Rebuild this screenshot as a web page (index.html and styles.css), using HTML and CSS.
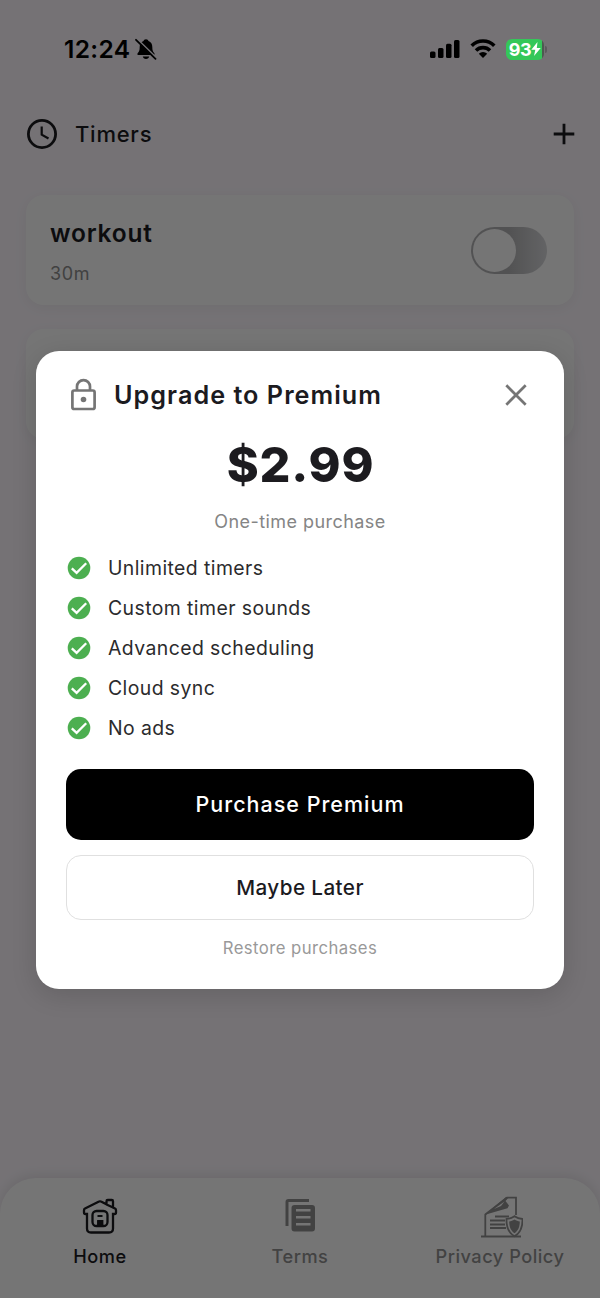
FILE: index.html
```html
<!DOCTYPE html>
<html lang="en">
<head>
<meta charset="utf-8">
<title>Timers</title>
<link rel="stylesheet" href="styles.css">
</head>
<body>
<div class="screen">
  <header class="status">
    <div class="status-left">
      <span class="clock">12:24</span>
      <svg class="bell" width="22" height="22" viewBox="0 0 22 22">
        <path d="M11 1.2c1.4 0 2.3.8 2.5 1.9 2.600 1 3.800 3.200 3.800 5.900 0 3.300.6 4.600 1.900 6 .8.900.4 2.100-.8 2.100H3.600c-1.200 0-1.600-1.200-.8-2.100 1.300-1.400 1.900-2.700 1.900-6 0-2.700 1.200-4.900 3.800-5.900.2-1.100 1.100-1.900 2.500-1.900zM7.800 18.500h6.400c-.3 1.600-1.500 2.500-3.200 2.500s-2.900-.9-3.200-2.500z"/>
        <path class="bell-gap" d="M2.300 1l19 18.600"/>
        <path class="bell-line" d="M1 1.800l19.500 19"/>
      </svg>
    </div>
    <div class="status-right">
      <svg width="30" height="20" viewBox="0 0 30 20">
        <rect x="0" y="12.500" width="5.500" height="6.500" rx="1.500"/><rect x="8" y="9" width="5.500" height="10" rx="1.500"/><rect x="16" y="4.800" width="5.500" height="14.200" rx="1.500"/><rect x="24" y="1" width="5.500" height="18" rx="1.500"/>
      </svg>
      <svg width="26" height="20" viewBox="0 0 26 20">
        <path class="wifi" d="M1.700 6.700a16 16 0 0 1 22.600 0M6 11.500a10 10 0 0 1 14 0"/>
        <path d="M13 19l-4.200-4.200a6 6 0 0 1 8.400 0z"/>
      </svg>
      <div class="battery"><span>93</span><svg width="10" height="14" viewBox="0 0 10 14"><path d="M6.500 0L.3 7.700H4.300L3 14l6.700-8H5.800z"/></svg><i></i></div>
    </div>
  </header>

  <div class="topbar">
    <svg width="32" height="32" viewBox="0 0 32 32"><circle cx="16" cy="16" r="13.600"/><path class="thin" d="M15.700 8.500v8.200l6.800 3.800"/></svg>
    <h1>Timers</h1>
    <svg class="plus" width="24" height="24" viewBox="0 0 24 24"><path d="M12 1.700v20.600M1.700 12h20.600"/></svg>
  </div>

  <main class="list">
    <section class="card">
      <div class="card-text"><h2>workout</h2><p>30m</p></div>
      <div class="switch"><div class="knob"></div></div>
    </section>
    <section class="card card-next"></section>
  </main>

  <nav class="tabs">
    <div class="tab active">
      <svg width="40" height="42" viewBox="0 0 40 42">
        <path d="M7 17H5.500a1.500 1.500 0 0 1-1.500-1.500v-2.300q0-1.200 1-1.700L19 4.600a2 2 0 0 1 2 0l5.500 2.700V4.200q0-1.200 1.200-1.200h4.100q1.200 0 1.200 1.200v6.300l2 1q1 .5 1 1.700v2.300a1.500 1.500 0 0 1-1.500 1.500H33v14.500q0 4-4 4H11q-4 0-4-4zM26.500 7.500l6.500 3"/>
        <rect x="12.500" y="14" width="15" height="15" rx="4"/>
        <path class="detail" d="M17.500 19h5M18 27.500V24h4.500v3.500z"/><path class="solid" d="M17.500 24h5v4h-5z"/>
      </svg>
      <span>Home</span>
    </div>
    <div class="tab">
      <svg width="40" height="42" viewBox="0 0 40 42">
        <path class="pages" d="M7 29V5q0-1.500 1.500-1.500H29"/>
        <path class="solid" fill-rule="evenodd" d="M14.500 8h17.500q3 0 3 3v20.500q0 3-3 3H14.500q-3 0-3-3V11q0-3 3-3zM16 12v2.600h14.500V12zm0 7v2.600h14.500V19zm0 7v2.600h14.500V26z"/>
      </svg>
      <span>Terms</span>
    </div>
    <div class="tab">
      <svg class="policy" width="42" height="42" viewBox="0 0 42 42">
        <path d="M0 40.500h40M4.300 40V18.500L26 1.700h9V19"/>
        <path class="solid" d="M4 18.800L25 1h3l-3.500 4 3.500 4.500-1.500 2.700z"/>
        <path class="cut" d="M13 13L23.500 5.500 20 10z"/>
        <path d="M14 20.500h14M9 24.500h15M9 28.500h15M9 32h16"/>
        <path class="shield" d="M33.500 20.200c2.500 1.800 5 2.600 8 2.800.2 8-1.500 13.500-8 17.300-6.500-3.800-8.200-9.300-8-17.300 3-.2 5.500-1 8-2.800z"/>
        <path class="solid" d="M33.500 23.500c1.800 1.200 3.500 1.800 5.300 2-.1 5.500-1.500 9-5.300 11.700-3.800-2.700-5.200-6.200-5.300-11.700 1.800-.2 3.500-.8 5.300-2z"/>
      </svg>
      <span>Privacy Policy</span>
    </div>
  </nav>
</div>

<div class="scrim">
  <div class="dialog">
    <div class="dialog-head">
      <svg width="28" height="34" viewBox="0 0 28 34"><rect x="2.400" y="12.500" width="22.200" height="18.500" rx="1.800"/><path d="M7 12V8.600a6.500 6.500 0 0 1 13 0V12"/><circle class="dot" cx="13.500" cy="21.500" r="2.800"/></svg>
      <h3>Upgrade to Premium</h3>
      <svg class="close" width="22" height="22" viewBox="0 0 22 22"><path d="M1.300 1.300l19.400 19.400M20.700 1.300L1.300 20.700"/></svg>
    </div>
    <div class="price">$2.99</div>
    <div class="once">One-time purchase</div>
    <ul class="features">
      <li><svg class="check" width="24" height="24" viewBox="0 0 24 24"><circle cx="12" cy="12" r="11.300"/><path d="M4.800 12.300l4.800 4.600 9.600-9.600"/></svg><span>Unlimited timers</span></li>
      <li><svg class="check" width="24" height="24" viewBox="0 0 24 24"><circle cx="12" cy="12" r="11.300"/><path d="M4.800 12.300l4.800 4.600 9.600-9.600"/></svg><span>Custom timer sounds</span></li>
      <li><svg class="check" width="24" height="24" viewBox="0 0 24 24"><circle cx="12" cy="12" r="11.300"/><path d="M4.800 12.300l4.800 4.600 9.600-9.600"/></svg><span>Advanced scheduling</span></li>
      <li><svg class="check" width="24" height="24" viewBox="0 0 24 24"><circle cx="12" cy="12" r="11.300"/><path d="M4.800 12.300l4.800 4.600 9.600-9.600"/></svg><span>Cloud sync</span></li>
      <li><svg class="check" width="24" height="24" viewBox="0 0 24 24"><circle cx="12" cy="12" r="11.300"/><path d="M4.800 12.300l4.800 4.600 9.600-9.600"/></svg><span>No ads</span></li>
    </ul>
    <button class="buy">Purchase Premium</button>
    <button class="later">Maybe Later</button>
    <div class="restore">Restore purchases</div>
  </div>
</div>
</body>
</html>
```
FILE: styles.css
```css
* { box-sizing: border-box; }
body { margin: 0; font-family: Inter, "Liberation Sans", sans-serif; color: #1c1b1f; }
h1, h2, h3, p, ul { margin: 0; padding: 0; }
svg { display: block; flex: none; }

.screen { height: 1298px; background: #fef9ff; display: flex; flex-direction: column; overflow: hidden; }

.status { height: 98px; padding: 0 56px 0 64px; display: flex; justify-content: space-between; align-items: center; position: relative; z-index: 3; color: #000; }
.status-left { display: flex; align-items: center; gap: 5px; }
.clock { font-size: 24.500px; font-weight: 600; letter-spacing: .35px; }
.bell-gap { stroke: #757376; stroke-width: 1.600; }
.bell-line { stroke: #000; stroke-width: 1.800; stroke-linecap: round; }
.status-right { display: flex; align-items: center; gap: 10px; }
.wifi { fill: none; stroke: #000; stroke-width: 3.600; }
.battery { width: 38px; height: 21px; border-radius: 6px; background: linear-gradient(90deg, #34c759 94%, #4d5a50 94%); color: #fff; display: flex; align-items: center; justify-content: center; font-size: 18px; font-weight: 700; letter-spacing: -.3px; position: relative; }
.battery svg { fill: #fff; }
.battery i { position: absolute; right: -3px; top: 7px; width: 2px; height: 7px; border-radius: 0 2px 2px 0; background: #5c5a5d; }

.topbar { height: 72px; padding: 0 24px 0 26px; display: flex; align-items: center; gap: 17px; }
.topbar svg { fill: none; stroke: #1c1b1f; stroke-width: 2.800; }
.topbar svg .thin { stroke-width: 2.200; }
.topbar h1 { font-size: 22px; font-weight: 500; letter-spacing: .75px; }
.topbar .plus { margin-left: auto; }

.list { padding: 25px 26px; display: flex; flex-direction: column; gap: 24px; }
.card { height: 110px; padding: 0 27px 0 24px; border-radius: 18px; background: #fff; box-shadow: 0 3px 14px rgba(0, 0, 0, .05); display: flex; align-items: center; justify-content: space-between; }
.card h2 { font-size: 24.500px; line-height: 30px; font-weight: 600; letter-spacing: .8px; }
.card p { margin-top: 15px; font-size: 18px; line-height: 22px; letter-spacing: .65px; color: #8e8e8e; }
.card-text { padding-top: 2px; }
.switch { width: 76px; height: 47px; border-radius: 24px; padding: 2px 1.500px; background: linear-gradient(90deg, #b4b4b6 50%, #d8d9dc); }
.knob { width: 43px; height: 43px; border-radius: 50%; background: #fff; }

.tabs { height: 120px; margin-top: auto; padding: 19px 0 0; border-radius: 36px 36px 0 0; background: #fff; box-shadow: 0 -3px 12px rgba(0, 0, 0, .09); display: grid; grid-template-columns: repeat(3, 1fr); }
.tab { display: flex; flex-direction: column; align-items: center; gap: 6px; font-size: 18.200px; line-height: 22px; font-weight: 500; letter-spacing: .5px; color: #919191; white-space: nowrap; }
.tab svg { fill: none; stroke: currentColor; stroke-width: 1.800; }
.tab svg .solid { fill: currentColor; stroke: none; }
.tab svg .cut { fill: #fff; stroke: none; }
.tab svg .pages { stroke-width: 3; }
.tab svg .shield { fill: #fff; }
.tab .policy { margin: -1px 0 1px 4px; }
.active { color: #1c1b1f; }
.tab.active svg { stroke-width: 2.300; }
.active .detail { stroke-width: 1.800; }

.scrim { position: absolute; z-index: 2; inset: 0; height: 1298px; background: rgba(0, 0, 0, .54); display: flex; flex-direction: column; align-items: center; padding-top: 351px; }
.dialog { width: 528px; height: 638px; padding: 21px 30px 0; border-radius: 23px; background: #fff; box-shadow: 0 6px 26px rgba(0, 0, 0, .14); display: flex; flex-direction: column; }
.dialog-head { height: 46px; padding: 0 7px 0 4px; display: flex; align-items: center; gap: 16px; }
.dialog-head svg { fill: none; stroke: #757575; stroke-width: 2.700; }
.dialog-head .dot { fill: #757575; stroke: none; }
.dialog-head .close { margin-left: auto; }
.dialog-head h3 { font-size: 25.200px; font-weight: 600; letter-spacing: 1.030px; }
.price { margin-top: 17px; padding-left: 1px; text-align: center; font-size: 48.500px; line-height: 60px; font-weight: 800; letter-spacing: .85px; }
.once { margin-top: 16px; text-align: center; font-size: 18px; line-height: 22px; letter-spacing: .45px; color: #858585; }
.features { margin-top: 15px; list-style: none; }
.features li { height: 40.100px; padding-left: 1px; display: flex; align-items: center; gap: 17px; font-size: 19.400px; letter-spacing: .43px; color: #2b2b2d; }
.check { fill: #4caf50; }
.check path { fill: none; stroke: #fff; stroke-width: 2.300; }
button { font-family: inherit; display: block; width: 100%; padding: 0; border-radius: 15px; color: #1c1b1f; }
.buy { height: 71px; margin-top: 20.500px; border: 0; background: #000; color: #fff; font-size: 21.500px; font-weight: 500; letter-spacing: 1px; }
.later { height: 65px; margin-top: 15px; padding-top: 1px; border: 1.500px solid #e0e0e0; background: #fff; font-size: 20.700px; font-weight: 500; letter-spacing: .4px; }
.restore { margin-top: 17px; text-align: center; font-size: 16.700px; line-height: 22px; letter-spacing: .45px; color: #999; }
```
